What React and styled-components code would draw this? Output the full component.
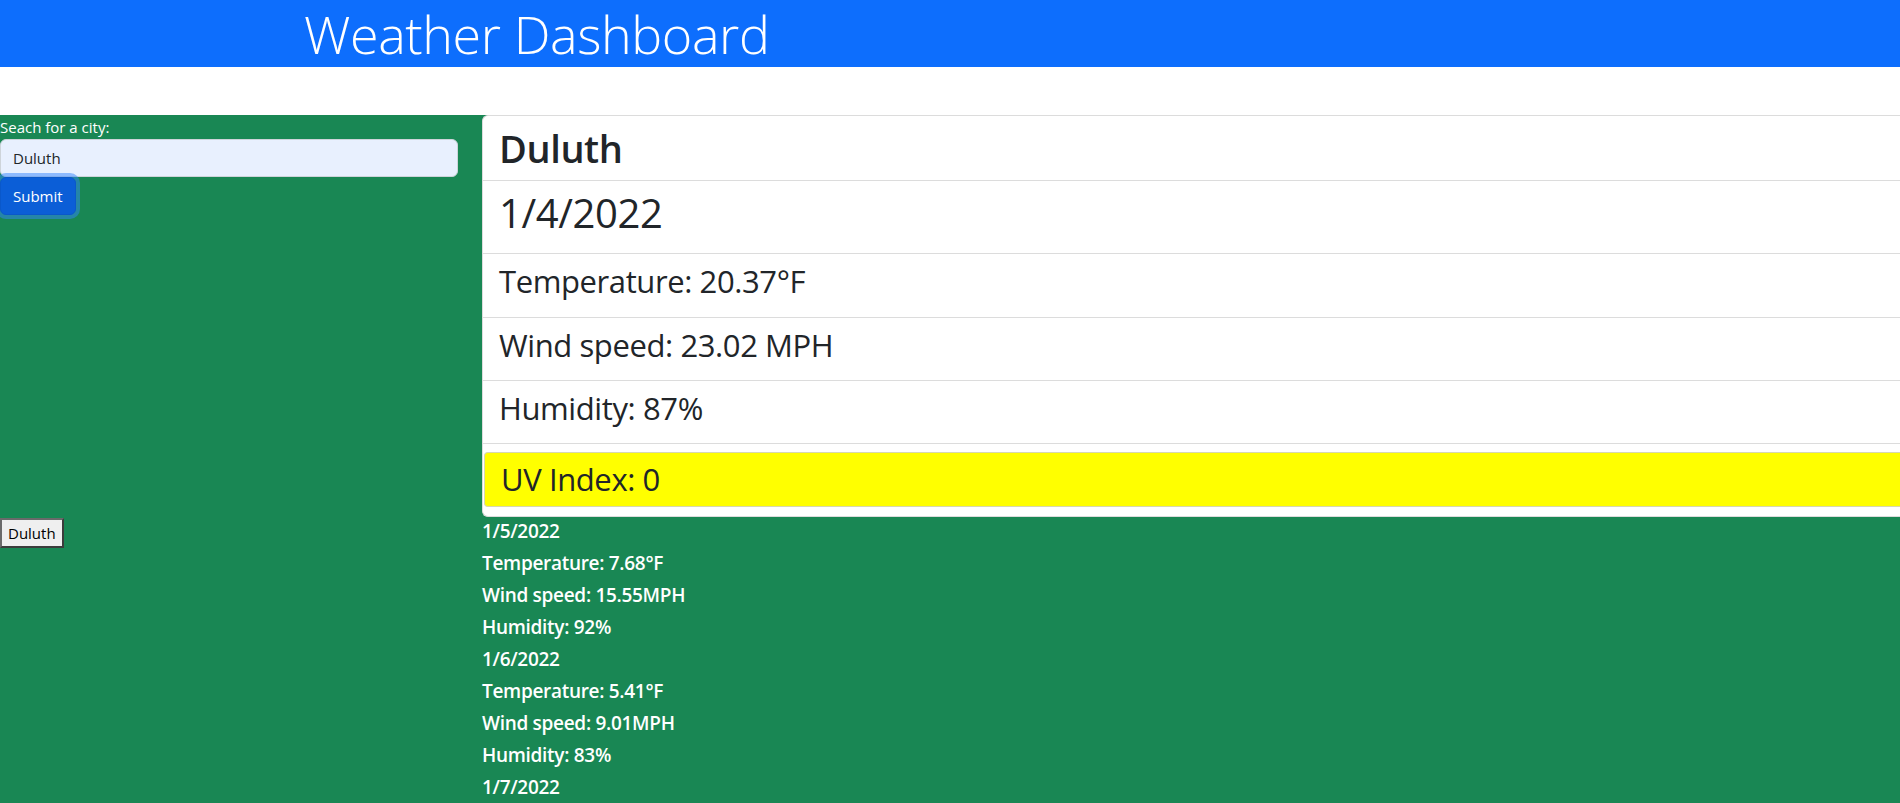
import React from 'react';
import styled, { createGlobalStyle } from 'styled-components';

const GlobalStyle = createGlobalStyle`
  html, body {
    margin: 0;
    padding: 0;
    overflow: hidden;
    background: #fff;
  }
  body {
    font-family: "Open Sans", "Noto Sans", "Liberation Sans", sans-serif;
    color: #212529;
    font-size: 16px;
    line-height: 1.5;
  }
  * {
    box-sizing: border-box;
  }
`;

const Header = styled.header`
  background-color: #0d6efd;
  margin-bottom: 48px;
`;

const HeaderInner = styled.div`
  width: 1320px;
  margin: 0 auto;
  padding: 0 12px 0 14px;
`;

const Title = styled.h1`
  margin: 0;
  color: #fff;
  font-size: 52px;
  font-weight: 300;
  line-height: 67px;
  letter-spacing: -0.4px;
`;

const Main = styled.main`
  background-color: #198754;
  display: grid;
  grid-template-columns: 482px 1fr;
  min-height: 700px;
`;

const SearchForm = styled.form`
  display: flex;
  flex-direction: column;
  align-items: flex-start;
`;

const Label = styled.label`
  color: #fff;
  font-size: 15px;
  line-height: 24px;
`;

const CityInput = styled.input`
  width: 95%;
  height: 38px;
  padding: 6px 12px;
  font-family: inherit;
  font-size: 15px;
  color: #212529;
  background-color: #e8f0fe;
  border: 1px solid #ced4da;
  border-radius: 6px;
  outline: none;
`;

const SubmitButton = styled.button`
  height: 38px;
  padding: 6px 12px;
  font-family: inherit;
  font-size: 15px;
  line-height: 24px;
  color: #fff;
  background-color: #0b5ed7;
  border: 1px solid #0a58ca;
  border-radius: 6px;
  box-shadow: 0 0 0 4px rgba(49, 132, 253, 0.5);
  cursor: pointer;
`;

const Card = styled.div`
  background: #fff;
  border: 1px solid #dcdcdc;
  border-right: none;
  border-radius: 6px 0 0 6px;
  overflow: hidden;
`;

const CardItem = styled.div`
  padding: 8px 16px;
  border-bottom: 1px solid #dcdcdc;
`;

const CardHeading = styled.h2`
  margin: 0 0 ${p => p.$gap}px;
  font-size: ${p => p.$size}px;
  font-weight: ${p => p.$weight || 500};
  line-height: ${p => p.$lh}px;
  color: #212529;
  letter-spacing: -0.4px;
`;

const UvWrap = styled.div`
  padding: 8px 0 9px 1px;
`;

const UvBadge = styled.div`
  background-color: ${p => p.$color};
  border: 1px solid #d8d8b0;
  border-right: none;
  border-radius: 4px 0 0 4px;
  padding: 7px 16px;
  font-size: 31px;
  font-weight: 500;
  line-height: 39px;
  letter-spacing: -0.4px;
`;

const History = styled.div`
  display: flex;
  flex-direction: column;
  align-items: flex-start;
  padding-top: 1px;
`;

const HistoryButton = styled.button`
  height: 30px;
  padding: 0 6px;
  font-family: inherit;
  font-size: 15px;
  color: #000;
  background-color: #efefef;
  border: 2px solid #3c3c3c;
  border-top-color: #6a6a6a;
  border-left-color: #6a6a6a;
  cursor: pointer;
`;

const Forecast = styled.div`
  color: #fff;
  padding-top: 2px;
`;

const ForecastLine = styled.h5`
  margin: 0 0 8px;
  font-size: 19px;
  font-weight: 600;
  line-height: 24px;
  letter-spacing: -0.3px;
`;

const current = {
  city: 'Duluth',
  date: '1/4/2022',
  temp: '20.37',
  wind: '23.02',
  humidity: 87,
  uv: 0,
};

const forecast = [
  { date: '1/5/2022', temp: '7.68', wind: '15.55', humidity: 92 },
  { date: '1/6/2022', temp: '5.41', wind: '9.01', humidity: 83 },
  { date: '1/7/2022', temp: '-2.15', wind: '11.41', humidity: 78 },
  { date: '1/8/2022', temp: '12.9', wind: '8.34', humidity: 81 },
  { date: '1/9/2022', temp: '18.12', wind: '6.2', humidity: 86 },
];

const uvColor = uv => {
  if (uv < 3) return '#ffff00';
  if (uv < 6) return '#ffa500';
  return '#ff0000';
};

export default function App() {
  return (
    <>
      <GlobalStyle />
      <Header>
        <HeaderInner>
          <Title>Weather Dashboard</Title>
        </HeaderInner>
      </Header>
      <Main>
        <SearchForm onSubmit={e => e.preventDefault()}>
          <Label htmlFor="city">Seach for a city:</Label>
          <CityInput id="city" defaultValue={current.city} />
          <SubmitButton type="submit">Submit</SubmitButton>
        </SearchForm>

        <Card>
          <CardItem>
            <CardHeading $size={38} $lh={48} $gap={0} $weight={600}>{current.city}</CardHeading>
          </CardItem>
          <CardItem>
            <CardHeading $size={40} $lh={48} $gap={8}>{current.date}</CardHeading>
          </CardItem>
          <CardItem>
            <CardHeading $size={31} $lh={39} $gap={8}>Temperature: {current.temp}°F</CardHeading>
          </CardItem>
          <CardItem>
            <CardHeading $size={31} $lh={38} $gap={8}>Wind speed: {current.wind} MPH</CardHeading>
          </CardItem>
          <CardItem>
            <CardHeading $size={31} $lh={38} $gap={8}>Humidity: {current.humidity}%</CardHeading>
          </CardItem>
          <UvWrap>
            <UvBadge $color={uvColor(current.uv)}>UV Index: {current.uv}</UvBadge>
          </UvWrap>
        </Card>

        <History>
          <HistoryButton>Duluth</HistoryButton>
        </History>

        <Forecast>
          {forecast.map(day => (
            <React.Fragment key={day.date}>
              <ForecastLine>{day.date}</ForecastLine>
              <ForecastLine>Temperature: {day.temp}°F</ForecastLine>
              <ForecastLine>Wind speed: {day.wind}MPH</ForecastLine>
              <ForecastLine>Humidity: {day.humidity}%</ForecastLine>
            </React.Fragment>
          ))}
        </Forecast>
      </Main>
    </>
  );
}
